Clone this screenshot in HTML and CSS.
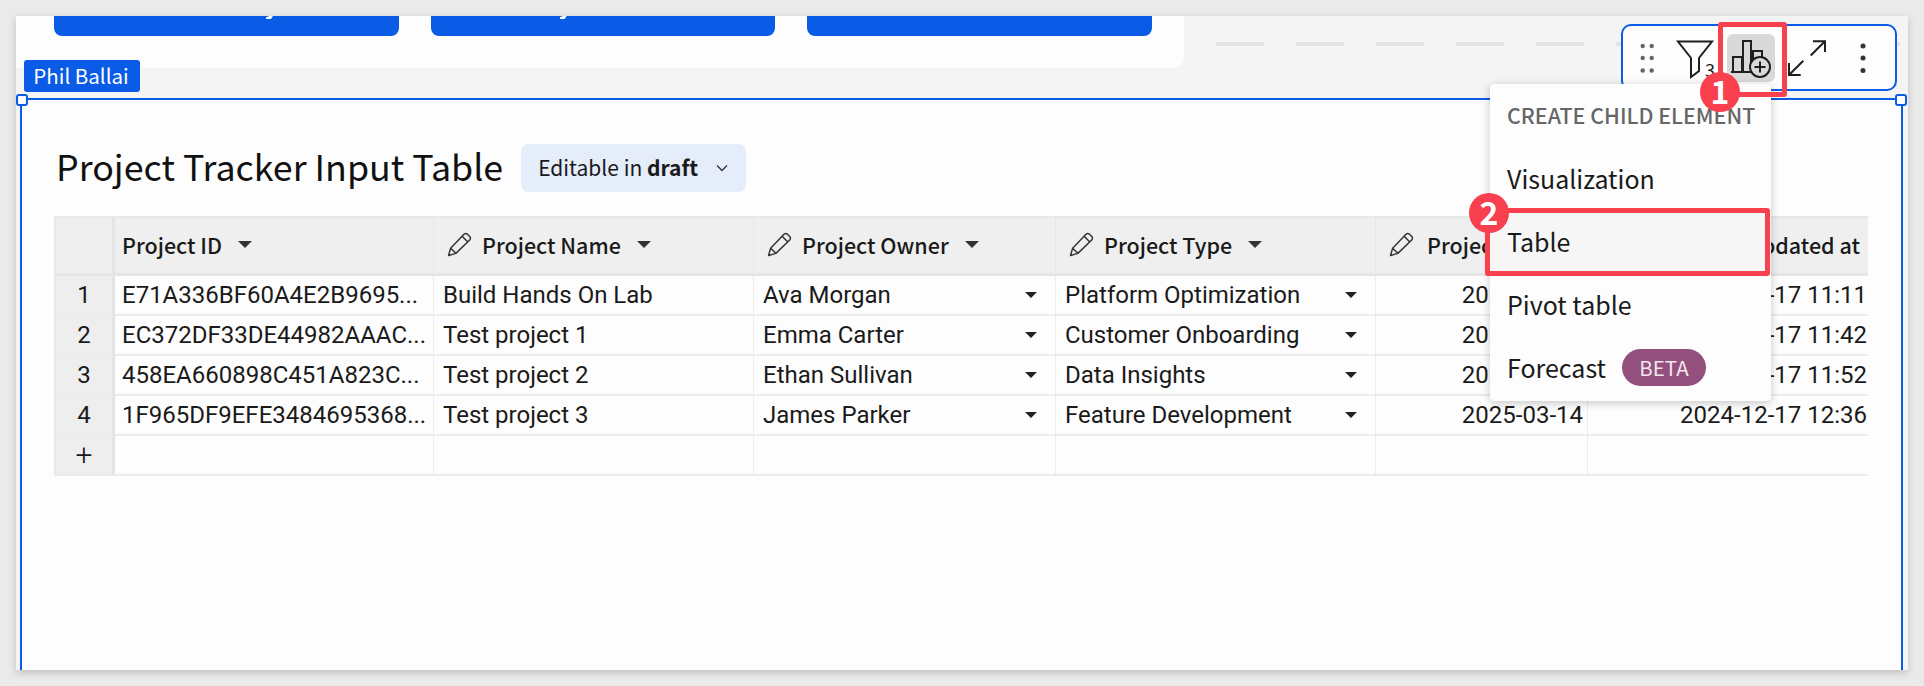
FILE: index.html
```html
<!DOCTYPE html>
<html lang="en">
    <head>
        <meta charset="UTF-8">
        <meta name="viewport" content="width=device-width, initial-scale=1.0">
        <link rel="stylesheet" href="styles.css">
        <title>Project Tracker Input Table</title>
    </head>
    <body>
        <div class="paper">
            <div class="top-band">
                <div class="top-card">
                    <div class="top-button tail-a"></div>
                    <div class="top-button tail-b"></div>
                    <div class="top-button"></div>
                </div>
                <div class="dashes"></div>
            </div>

            <div class="element">
                <span class="handle handle-left"></span>
                <span class="handle handle-right"></span>

                <div class="title-row">
                    <h1>Project Tracker Input Table</h1>
                    <div class="edit-pill">
                        <span>Editable in <b>draft</b></span>
                        <svg class="chevron" viewBox="0 0 12 8"><path d="M1 1.5 L6 6.5 L11 1.5"/></svg>
                    </div>
                </div>

                <div class="table-wrap">
                    <table>
                        <colgroup>
                            <col class="c-index">
                            <col class="c-id">
                            <col class="c-name">
                            <col class="c-owner">
                            <col class="c-type">
                            <col class="c-date">
                            <col class="c-updated">
                        </colgroup>
                        <thead>
                            <tr>
                                <th class="index"></th>
                                <th><div class="head plain"><span>Project ID</span><i class="arrow"></i></div></th>
                                <th><div class="head">
                                    <svg class="pencil" viewBox="0 0 24 24"><path d="M1.5 22.5 L3.5 15.5 L16.5 2 Q18 1 19.5 2 L22 4.5 Q23 6 22 7.5 L8.5 20.5 Z M3.5 15.5 L8.5 20.5 M14.5 4 L20 9.5"/></svg>
                                    <span>Project Name</span><i class="arrow"></i></div></th>
                                <th><div class="head">
                                    <svg class="pencil" viewBox="0 0 24 24"><path d="M1.5 22.5 L3.5 15.5 L16.5 2 Q18 1 19.5 2 L22 4.5 Q23 6 22 7.5 L8.5 20.5 Z M3.5 15.5 L8.5 20.5 M14.5 4 L20 9.5"/></svg>
                                    <span>Project Owner</span><i class="arrow"></i></div></th>
                                <th><div class="head">
                                    <svg class="pencil" viewBox="0 0 24 24"><path d="M1.5 22.5 L3.5 15.5 L16.5 2 Q18 1 19.5 2 L22 4.5 Q23 6 22 7.5 L8.5 20.5 Z M3.5 15.5 L8.5 20.5 M14.5 4 L20 9.5"/></svg>
                                    <span>Project Type</span><i class="arrow"></i></div></th>
                                <th><div class="head head-date">
                                    <svg class="pencil" viewBox="0 0 24 24"><path d="M1.5 22.5 L3.5 15.5 L16.5 2 Q18 1 19.5 2 L22 4.5 Q23 6 22 7.5 L8.5 20.5 Z M3.5 15.5 L8.5 20.5 M14.5 4 L20 9.5"/></svg>
                                    <span>Project Date</span></div></th>
                                <th><div class="head head-right"><span>Updated at</span></div></th>
                            </tr>
                        </thead>
                        <tbody>
                            <tr>
                                <td class="index">1</td>
                                <td>E71A336BF60A4E2B9695...</td>
                                <td>Build Hands On Lab</td>
                                <td><div class="select"><span>Ava Morgan</span><i class="arrow small"></i></div></td>
                                <td><div class="select"><span>Platform Optimization</span><i class="arrow small"></i></div></td>
                                <td class="right date">2025-03-14</td>
                                <td class="right">2024-12-17 11:11</td>
                            </tr>
                            <tr>
                                <td class="index">2</td>
                                <td>EC372DF33DE44982AAAC...</td>
                                <td>Test project 1</td>
                                <td><div class="select"><span>Emma Carter</span><i class="arrow small"></i></div></td>
                                <td><div class="select"><span>Customer Onboarding</span><i class="arrow small"></i></div></td>
                                <td class="right date">2025-03-14</td>
                                <td class="right">2024-12-17 11:42</td>
                            </tr>
                            <tr>
                                <td class="index">3</td>
                                <td>458EA660898C451A823C...</td>
                                <td>Test project 2</td>
                                <td><div class="select"><span>Ethan Sullivan</span><i class="arrow small"></i></div></td>
                                <td><div class="select"><span>Data Insights</span><i class="arrow small"></i></div></td>
                                <td class="right date">2025-03-14</td>
                                <td class="right">2024-12-17 11:52</td>
                            </tr>
                            <tr>
                                <td class="index">4</td>
                                <td>1F965DF9EFE3484695368...</td>
                                <td>Test project 3</td>
                                <td><div class="select"><span>James Parker</span><i class="arrow small"></i></div></td>
                                <td><div class="select"><span>Feature Development</span><i class="arrow small"></i></div></td>
                                <td class="right date">2025-03-14</td>
                                <td class="right">2024-12-17 12:36</td>
                            </tr>
                            <tr>
                                <td class="index plus">+</td>
                                <td></td>
                                <td></td>
                                <td></td>
                                <td></td>
                                <td></td>
                                <td></td>
                            </tr>
                        </tbody>
                    </table>
                </div>
            </div>
        </div>

        <div class="user-tag">Phil Ballai</div>

        <div class="toolbar">
            <svg class="tool grip" viewBox="0 0 32 48">
                <circle cx="11.7" cy="12" r="2.2"/><circle cx="20.7" cy="12" r="2.2"/>
                <circle cx="11.7" cy="24" r="2.2"/><circle cx="20.7" cy="24" r="2.2"/>
                <circle cx="11.7" cy="36.5" r="2.2"/><circle cx="20.7" cy="36.5" r="2.2"/>
            </svg>
            <svg class="tool line-icon" viewBox="0 0 48 48">
                <path d="M7 7.5 H41 L28 24 V37 L20 43 V24 Z"/>
                <text x="34" y="43">3</text>
            </svg>
            <svg class="tool line-icon active" viewBox="0 0 48 48">
                <path d="M4 38 H24 M6 38 V23 H15 V38 M16 38 V7 H24 V38 M26 26 V17 H35 V24"/>
                <circle cx="33" cy="33" r="10"/>
                <path d="M33 27.5 V38.5 M27.5 33 H38.5"/>
            </svg>
            <svg class="tool line-icon" viewBox="0 0 48 48">
                <path d="M27.7 21.5 L42 7.2 M30 7.2 H42 V18 M6 41 L20.3 26.8 M6 29 V41 H17.7"/>
            </svg>
            <svg class="tool kebab" viewBox="0 0 48 48">
                <circle cx="24" cy="12" r="2.5"/><circle cx="24" cy="24" r="2.5"/><circle cx="24" cy="36.5" r="2.5"/>
            </svg>
        </div>

        <div class="menu">
            <div class="menu-title">CREATE CHILD ELEMENT</div>
            <div class="menu-item">Visualization</div>
            <div class="menu-item hovered">Table</div>
            <div class="menu-item">Pivot table</div>
            <div class="menu-item">Forecast <span class="beta">BETA</span></div>
        </div>

        <!-- tutorial callouts -->
        <div class="callout-box box-one"></div>
        <div class="callout-box box-two"></div>
        <div class="callout-num num-one">1</div>
        <div class="callout-num num-two">2</div>
    </body>
</html>
```

FILE: styles.css
```css
html, body {
    margin: 0;
    height: 100%;
}

body {
    background: #eaeaea;
    font-family: "Noto Sans CJK JP", "Noto Sans", sans-serif;
    color: #1a1a1a;
    padding: 16px;
    box-sizing: border-box;
    overflow: hidden;
    position: relative;
}

.paper {
    height: 654px;
    background: #f4f4f4;
    box-shadow: 0 3px 8px rgba(0, 0, 0, 0.18);
    display: flex;
    flex-direction: column;
}

/* strip above the selected element */
.top-band {
    height: 82px;
    flex-shrink: 0;
    position: relative;
}

.top-card {
    height: 52px;
    padding: 0 32px 0 38px;
    box-sizing: border-box;
    width: 1168px;
    background: #fdfdfd;
    border-bottom-right-radius: 10px;
    display: flex;
    gap: 32px;
}

.top-button {
    width: 345px;
    height: 20px;
    background: #0a5ce6;
    border-radius: 0 0 8px 8px;
    position: relative;
}

/* tails of the button captions, the rest is scrolled out of view */
.tail-a::after,
.tail-b::after {
    content: "";
    position: absolute;
    top: 0;
    width: 7px;
    height: 3px;
    background: #fff;
    clip-path: polygon(50% 0, 100% 0, 70% 100%, 0 100%, 0 40%);
}

.tail-a::after {
    left: 212px;
}

.tail-b::after {
    left: 129px;
}

.dashes {
    position: absolute;
    left: 1200px;
    right: 8px;
    top: 26px;
    height: 4px;
    background: repeating-linear-gradient(90deg, #e4e4e4 0, #e4e4e4 48px, transparent 48px, transparent 80px);
}

.element {
    flex: 1;
    margin: 0 5px 0 4px;
    background: #fdfdfd;
    border: 2px solid #0a5ce6;
    border-bottom: none;
    padding: 44px 33px 0 32px;
    position: relative;
}

.handle {
    position: absolute;
    top: -6px;
    width: 8px;
    height: 8px;
    background: #fff;
    border: 2px solid #0a5ce6;
    border-radius: 3px;
}

.handle-left {
    left: -6px;
}

.handle-right {
    right: -6px;
}

.title-row {
    display: flex;
    align-items: flex-start;
    gap: 18px;
    height: 48px;
    padding-left: 2px;
}

h1 {
    margin: 0;
    font-size: 35.8px;
    font-weight: 400;
    line-height: 42px;
    color: #111;
}

.edit-pill {
    display: flex;
    align-items: center;
    gap: 18px;
    height: 48px;
    padding: 0 18px 0 17px;
    background: #e5ecfa;
    border-radius: 8px;
    font-size: 21px;
}

.edit-pill span {
    padding-bottom: 2px;
}

.edit-pill b {
    font-weight: 700;
}

.chevron {
    width: 12px;
    height: 8px;
    fill: none;
    stroke: #333;
    stroke-width: 1.3;
}

.table-wrap {
    margin-top: 24px;
    overflow: hidden;
}

table {
    width: 1814px;
    table-layout: fixed;
    border-collapse: separate;
    border-spacing: 0;
    background: #fdfdfd;
    border-top: 2px solid #e8e8e8;
}

.c-index { width: 61px; }
.c-id { width: 319px; }
.c-name { width: 320px; }
.c-owner { width: 302px; }
.c-type { width: 320px; }
.c-date { width: 212px; }
.c-updated { width: 280px; }

th {
    height: 53px;
    padding: 0 0 2px;
    box-sizing: content-box;
    background: #efefef;
    border-right: 1px solid #e6e6e6;
    border-bottom: 3px solid #e6e6e6;
    font-size: 21.5px;
    font-weight: 500;
    text-align: left;
}

td {
    height: 38px;
    padding: 0 9px;
    border-right: 1px solid #ececec;
    border-bottom: 2px solid #ececec;
    font-family: Roboto, sans-serif;
    font-size: 24px;
    line-height: 38px;
    white-space: nowrap;
    overflow: hidden;
}

td:first-child + td {
    padding-left: 7px;
    padding-right: 0;
}

td:last-child, th:last-child {
    border-right: none;
}

.index {
    background: #eeeeee;
    border-right: 3px solid #e4e4e4;
    border-left: 2px solid #e8e8e8;
    padding: 0;
    text-align: center;
}

.right {
    text-align: right;
    padding-right: 1px;
}

.right.date {
    padding-right: 4px;
}

.head {
    display: flex;
    align-items: center;
    padding-left: 13px;
    line-height: 30px;
}

.head.plain {
    padding-left: 7px;
}

.head-right {
    justify-content: flex-end;
    padding-right: 8px;
}

.pencil {
    width: 25px;
    height: 25px;
    margin-right: 10px;
    fill: none;
    stroke: #333;
    stroke-width: 1.4;
    stroke-linejoin: round;
}

.head-date .pencil {
    margin-right: 13px;
}

.arrow {
    width: 0;
    height: 0;
    margin-left: 16px;
    border-left: 7px solid transparent;
    border-right: 7px solid transparent;
    border-top: 7px solid #333;
}

.arrow.small {
    border-left-width: 6px;
    border-right-width: 6px;
    border-top-width: 6px;
    border-top-color: #222;
}

.select {
    display: flex;
    align-items: center;
    justify-content: space-between;
    padding-right: 9px;
}

.plus {
    font-weight: 300;
    font-size: 30px;
}

.user-tag {
    position: absolute;
    left: 24px;
    top: 60px;
    width: 116px;
    height: 32px;
    padding-right: 2px;
    box-sizing: border-box;
    background: #0a5ce6;
    border-radius: 3px;
    color: #fff;
    font-size: 20.5px;
    line-height: 30px;
    text-align: center;
}

.toolbar {
    position: absolute;
    left: 1621px;
    top: 24px;
    width: 276px;
    height: 67px;
    box-sizing: border-box;
    padding-left: 8px;
    background: #fdfdfd;
    border: 2px solid #0a5ce6;
    border-radius: 10px;
    display: flex;
    align-items: center;
    gap: 8px;
}

.tool {
    width: 48px;
    height: 48px;
    flex-shrink: 0;
}

.tool.grip {
    width: 32px;
    fill: #666;
}

.tool.kebab {
    fill: #333;
}

.line-icon {
    fill: none;
    stroke: #1f1f1f;
    stroke-width: 2;
}

.line-icon text {
    fill: #1f1f1f;
    stroke: none;
    font-size: 18px;
}

.line-icon.active {
    background: #d9d9d9;
    border-radius: 6px;
}

.line-icon.active circle {
    fill: #d9d9d9;
}

.menu {
    position: absolute;
    left: 1490px;
    top: 84px;
    width: 281px;
    height: 317px;
    box-sizing: border-box;
    background: #fdfdfd;
    border-radius: 4px;
    box-shadow: 0 2px 10px rgba(0, 0, 0, 0.22);
}

.menu-title {
    height: 63px;
    padding-left: 17px;
    font-size: 21.4px;
    font-weight: 500;
    line-height: 62px;
    color: #666;
}

.menu-item {
    height: 63px;
    padding-left: 17px;
    font-size: 25px;
    line-height: 63px;
    display: flex;
    align-items: center;
    gap: 16px;
}

.menu-item.hovered {
    background: #f6f6f6;
}

.beta {
    width: 84px;
    height: 37px;
    background: #94507c;
    border-radius: 19px;
    color: #f3e6ee;
    font-size: 20.5px;
    line-height: 37px;
    text-align: center;
}

.callout-box {
    position: absolute;
    box-sizing: border-box;
    border: 5px solid #f9404f;
    border-radius: 3px;
}

.box-one {
    left: 1718px;
    top: 22px;
    width: 69px;
    height: 75px;
}

.box-two {
    left: 1485px;
    top: 208px;
    width: 285px;
    height: 68px;
}

.callout-num {
    position: absolute;
    width: 40px;
    height: 40px;
    background: #f9404f;
    border-radius: 50%;
    color: #fff;
    font-size: 32px;
    font-weight: 700;
    line-height: 37px;
    text-align: center;
}

.num-one {
    left: 1700px;
    top: 72px;
}

.num-two {
    left: 1469px;
    top: 193px;
}
```
